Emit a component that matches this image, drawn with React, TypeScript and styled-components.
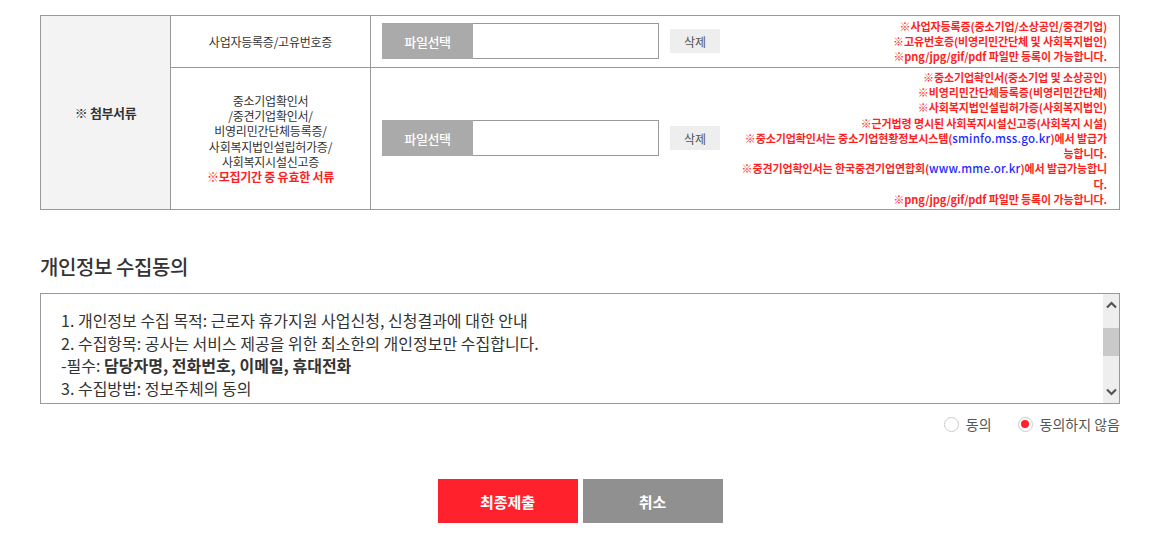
import styled, { createGlobalStyle } from "styled-components";

const GlobalStyle = createGlobalStyle`
  body {
    margin: 0;
    background: #fff;
    font-family: "Noto Sans CJK KR", "Noto Sans", sans-serif;
    color: #333;
  }
`;

const Wrap = styled.div`
  width: 1080px;
  margin-left: 40px;
  padding-top: 15px;
`;

const FormTable = styled.table`
  width: 1080px;
  border-collapse: collapse;
  table-layout: fixed;
  border: 1px solid #999;
  td,
  th {
    border: 1px solid #999;
    padding: 0;
  }
`;

const HeadCell = styled.th`
  width: 129px;
  background: #f3f3f3;
  font-size: 13px;
  font-weight: 700;
  color: #333;
  letter-spacing: -0.03em;
  text-align: center;
`;

const LabelCell = styled.td<{ $h: number }>`
  width: 199px;
  height: ${(p) => p.$h}px;
  text-align: center;
  font-size: 12px;
  line-height: 15.3px;
  color: #333;
  letter-spacing: -0.02em;
`;

const RedLabel = styled.span`
  color: #ff1f1f;
  font-weight: 700;
`;

const InputCell = styled.td`
  padding: 0 11px !important;
`;

const InputRow = styled.div`
  display: flex;
  align-items: center;
`;

const FileBox = styled.div`
  display: flex;
  width: 277px;
  height: 36px;
  box-sizing: border-box;
  border: 1px solid #999;
  border-left: none;
  background: #fff;
`;

const FileButton = styled.div`
  width: 91px;
  height: 36px;
  margin-top: -1px;
  background: #aaa;
  color: #fff;
  font-size: 13px;
  font-weight: 500;
  display: flex;
  align-items: center;
  justify-content: center;
  letter-spacing: -0.03em;
`;

const DeleteButton = styled.div`
  width: 50px;
  height: 24px;
  margin-left: 11px;
  background: #eee;
  color: #555;
  font-size: 12px;
  display: flex;
  align-items: center;
  justify-content: center;
`;

const Notes = styled.div`
  margin-left: auto;
  margin-right: 1px;
  text-align: right;
  font-size: 11px;
  font-weight: 700;
  line-height: 15.3px;
  color: #ff1f1f;
  letter-spacing: -0.01em;
  white-space: nowrap;
`;

const Link = styled.span`
  color: #1f2bff;
  font-weight: 500;
  font-size: 11.5px;
  letter-spacing: 0.02em;
`;

const SectionTitle = styled.h3`
  margin: 44px 0 0;
  font-size: 20px;
  font-weight: 500;
  line-height: 26px;
  color: #333;
  letter-spacing: -0.02em;
`;

const AgreeBox = styled.div`
  margin-top: 13px;
  height: 111px;
  box-sizing: border-box;
  border: 1px solid #999;
  display: flex;
`;

const AgreeText = styled.div`
  flex: 1;
  overflow: hidden;
  padding: 15px 20px 0;
  font-size: 16px;
  line-height: 22.7px;
  color: #333;
`;

const ScrollTrack = styled.div`
  width: 16px;
  background: #eee;
  display: flex;
  flex-direction: column;
  align-items: center;
`;

const ScrollArrow = styled.div`
  height: 22px;
  display: flex;
  align-items: center;
  justify-content: center;
`;

const ScrollThumb = styled.div`
  width: 16px;
  height: 28px;
  margin-top: 12px;
  background: #c9c9c9;
`;

const ScrollSpacer = styled.div`
  flex: 1;
`;

const RadioRow = styled.div`
  display: flex;
  justify-content: flex-end;
  gap: 26px;
  margin-top: 10px;
`;

const RadioLabel = styled.label`
  display: flex;
  align-items: center;
  gap: 7px;
  font-size: 14px;
  color: #555;
`;

const RadioCircle = styled.span<{ $on?: boolean }>`
  width: 15px;
  height: 15px;
  box-sizing: border-box;
  border-radius: 50%;
  border: 1px solid #ccc;
  background: #fff;
  display: flex;
  align-items: center;
  justify-content: center;
  &::after {
    content: "";
    width: 8px;
    height: 8px;
    border-radius: 50%;
    background: ${(p) => (p.$on ? "#ff1f2d" : "transparent")};
  }
`;

const ButtonRow = styled.div`
  display: flex;
  justify-content: center;
  gap: 5px;
  margin-top: 45px;
`;

const ActionButton = styled.button<{ $primary?: boolean }>`
  width: 140px;
  height: 44px;
  border: none;
  background: ${(p) => (p.$primary ? "#ff222d" : "#909090")};
  color: #fff;
  font-family: "Noto Sans CJK KR", sans-serif;
  font-size: 15px;
  font-weight: 700;
  cursor: pointer;
`;

const Chevron = ({ up }: { up?: boolean }) => (
  <svg width="11" height="8" viewBox="0 0 11 8">
    <path
      d={up ? "M1 6.5 L5.5 2 L10 6.5" : "M1 1.5 L5.5 6 L10 1.5"}
      fill="none"
      stroke="#555"
      strokeWidth="2.2"
    />
  </svg>
);

const FileInput = () => (
  <InputRow>
    <FileBox>
      <FileButton>파일선택</FileButton>
    </FileBox>
    <DeleteButton>삭제</DeleteButton>
  </InputRow>
);

export default function App() {
  return (
    <Wrap>
      <GlobalStyle />
      <FormTable>
        <tbody>
          <tr>
            <HeadCell rowSpan={2}>※ 첨부서류</HeadCell>
            <LabelCell $h={51}>사업자등록증/고유번호증</LabelCell>
            <InputCell>
              <InputRow>
                <FileInput />
                <Notes>
                  <div>※사업자등록증(중소기업/소상공인/중견기업)</div>
                  <div>※고유번호증(비영리민간단체 및 사회복지법인)</div>
                  <div>※png/jpg/gif/pdf 파일만 등록이 가능합니다.</div>
                </Notes>
              </InputRow>
            </InputCell>
          </tr>
          <tr>
            <LabelCell $h={141}>
              중소기업확인서
              <br />
              /중견기업확인서/
              <br />
              비영리민간단체등록증/
              <br />
              사회복지법인설립허가증/
              <br />
              사회복지시설신고증
              <br />
              <RedLabel>※모집기간 중 유효한 서류</RedLabel>
            </LabelCell>
            <InputCell>
              <InputRow>
                <FileInput />
                <Notes>
                  <div>※중소기업확인서(중소기업 및 소상공인)</div>
                  <div>※비영리민간단체등록증(비영리민간단체)</div>
                  <div>※사회복지법인설립허가증(사회복지법인)</div>
                  <div>※근거법령 명시된 사회복지시설신고증(사회복지 시설)</div>
                  <div>
                    ※중소기업확인서는 중소기업현황정보시스템(<Link>sminfo.mss.go.kr</Link>)에서 발급가
                  </div>
                  <div>능합니다.</div>
                  <div>
                    ※중견기업확인서는 한국중견기업연합회(<Link>www.mme.or.kr</Link>)에서 발급가능합니
                  </div>
                  <div>다.</div>
                  <div>※png/jpg/gif/pdf 파일만 등록이 가능합니다.</div>
                </Notes>
              </InputRow>
            </InputCell>
          </tr>
        </tbody>
      </FormTable>

      <SectionTitle>개인정보 수집동의</SectionTitle>
      <AgreeBox>
        <AgreeText>
          <div>1. 개인정보 수집 목적: 근로자 휴가지원 사업신청, 신청결과에 대한 안내</div>
          <div>2. 수집항목: 공사는 서비스 제공을 위한 최소한의 개인정보만 수집합니다.</div>
          <div>
            -필수: <b>담당자명, 전화번호, 이메일, 휴대전화</b>
          </div>
          <div>3. 수집방법: 정보주체의 동의</div>
          <div>4. 보유 및 이용기간: 사업 종료 후 5년간 보관하며, 이후 지체없이 파기합니다.</div>
        </AgreeText>
        <ScrollTrack>
          <ScrollArrow>
            <Chevron up />
          </ScrollArrow>
          <ScrollThumb />
          <ScrollSpacer />
          <ScrollArrow>
            <Chevron />
          </ScrollArrow>
        </ScrollTrack>
      </AgreeBox>
      <RadioRow>
        <RadioLabel>
          <RadioCircle />
          동의
        </RadioLabel>
        <RadioLabel>
          <RadioCircle $on />
          동의하지 않음
        </RadioLabel>
      </RadioRow>
      <ButtonRow>
        <ActionButton $primary>최종제출</ActionButton>
        <ActionButton>취소</ActionButton>
      </ButtonRow>
    </Wrap>
  );
}
